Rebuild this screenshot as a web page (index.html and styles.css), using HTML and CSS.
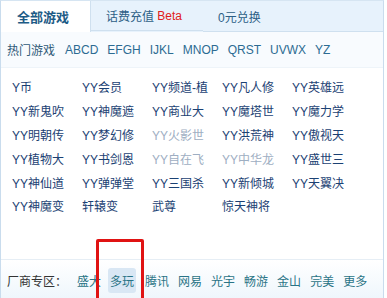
FILE: index.html
```html
<!DOCTYPE html>
<html lang="zh-CN">
<head>
  <meta charset="UTF-8">
  <meta name="viewport" content="width=device-width, initial-scale=1.0">
  <link rel="stylesheet" href="styles.css">
</head>
<body>

<div class="game-box">
  <div class="tabs">
    <a class="tab active">全部游戏</a>
    <a class="tab">话费充值 <span class="beta">Beta</span></a>
    <a class="tab">0元兑换</a>
    <span class="tab-fill"></span>
  </div>

  <div class="letters">
    <span class="letters-title">热门游戏</span>
    <a>ABCD</a>
    <a>EFGH</a>
    <a>IJKL</a>
    <a>MNOP</a>
    <a>QRST</a>
    <a>UVWX</a>
    <a>YZ</a>
  </div>

  <ul class="game-list">
    <li><a>Y币</a></li>
    <li><a>YY会员</a></li>
    <li><a>YY频道-植</a></li>
    <li><a>YY凡人修</a></li>
    <li><a>YY英雄远</a></li>
    <li><a>YY新鬼吹</a></li>
    <li><a>YY神魔遮</a></li>
    <li><a>YY商业大</a></li>
    <li><a>YY魔塔世</a></li>
    <li><a>YY魔力学</a></li>
    <li><a>YY明朝传</a></li>
    <li><a>YY梦幻修</a></li>
    <li><a class="faded">YY火影世</a></li>
    <li><a>YY洪荒神</a></li>
    <li><a>YY傲视天</a></li>
    <li><a>YY植物大</a></li>
    <li><a>YY书剑恩</a></li>
    <li><a class="faded">YY自在飞</a></li>
    <li><a class="faded">YY中华龙</a></li>
    <li><a>YY盛世三</a></li>
    <li><a>YY神仙道</a></li>
    <li><a>YY弹弹堂</a></li>
    <li><a>YY三国杀</a></li>
    <li><a>YY新倾城</a></li>
    <li><a>YY天翼决</a></li>
    <li><a>YY神魔变</a></li>
    <li><a>轩辕变</a></li>
    <li><a>武尊</a></li>
    <li><a>惊天神将</a></li>
  </ul>

  <div class="vendors">
    <span class="vendors-title">厂商专区：</span>
    <a>盛大</a>
    <a class="current">多玩</a>
    <a>腾讯</a>
    <a>网易</a>
    <a>光宇</a>
    <a>畅游</a>
    <a>金山</a>
    <a>完美</a>
    <a>更多</a>
  </div>

  <div class="marker"></div>
</div>

</body>
</html>
```

FILE: styles.css
```css
body {
  margin: 0;
  padding: 0;
  background-color: #fff;
  font-family: "Liberation Sans", "Noto Sans CJK SC", sans-serif;
  font-size: 12px;
}

a {
  text-decoration: none;
  cursor: pointer;
}

.game-box {
  position: relative;
  width: 384px;
  height: 310px;
  border: 1px solid #c9dced;
  border-top-color: #d6e5f2;
  box-sizing: border-box;
  overflow: hidden;
}

.tabs {
  display: flex;
  height: 31px;
  background-color: #e7f2fc;
}

.tab {
  display: flex;
  align-items: center;
  height: 30px;
  padding: 0 0 0 15px;
  color: #2d5f86;
  border-bottom: 1px solid #cfe0ef;
  white-space: pre;
}

.tab.active {
  width: 90px;
  padding-left: 16px;
  box-sizing: border-box;
  background-color: #fff;
  border-bottom: none;
  border-right: 1px solid #cfe0ef;
  height: 31px;
  font-size: 13px;
  font-weight: bold;
  color: #1d5b86;
}

.tab:nth-child(2) {
  width: 112px;
  box-sizing: border-box;
}

.beta {
  color: #e02020;
}

.tab-fill {
  flex: 1;
  border-bottom: 1px solid #cfe0ef;
}

.letters {
  display: flex;
  align-items: center;
  height: 35px;
  padding-left: 6px;
  background-color: #f8fbfe;
  border-bottom: 1px solid #eef4f9;
}

.letters-title {
  color: #2f5a78;
  margin-right: 1px;
}

.letters a {
  color: #2c6b92;
  margin-left: 9px;
}

.game-list {
  display: grid;
  grid-template-columns: repeat(5, 70px);
  grid-auto-rows: 23.8px;
  margin: 0;
  padding: 7px 0 0 11px;
  list-style: none;
  height: 192px;
  box-sizing: border-box;
  border-bottom: 1px solid #e6eef5;
}

.game-list li {
  display: flex;
  align-items: center;
  overflow: hidden;
  white-space: nowrap;
}

.game-list a {
  color: #1b4173;
}

.game-list a.faded {
  color: #9eaec2;
}

.vendors {
  display: flex;
  align-items: center;
  height: 40px;
  padding: 0 0 0 6px;
  background: linear-gradient(#ffffff, #eef6fc);
}

.vendors-title {
  color: #333;
  margin-right: 8px;
}

.vendors a {
  color: #2a7486;
  padding: 4px 2px;
  margin-right: 5px;
  border-radius: 3px;
}

.vendors a:nth-of-type(2) {
  margin-right: 7px;
}

.vendors a.current {
  background-color: #d9e7f4;
}

.marker {
  position: absolute;
  left: 95px;
  top: 238px;
  width: 42px;
  height: 80px;
  border: 3px solid #e01313;
  border-radius: 2px;
}
```
